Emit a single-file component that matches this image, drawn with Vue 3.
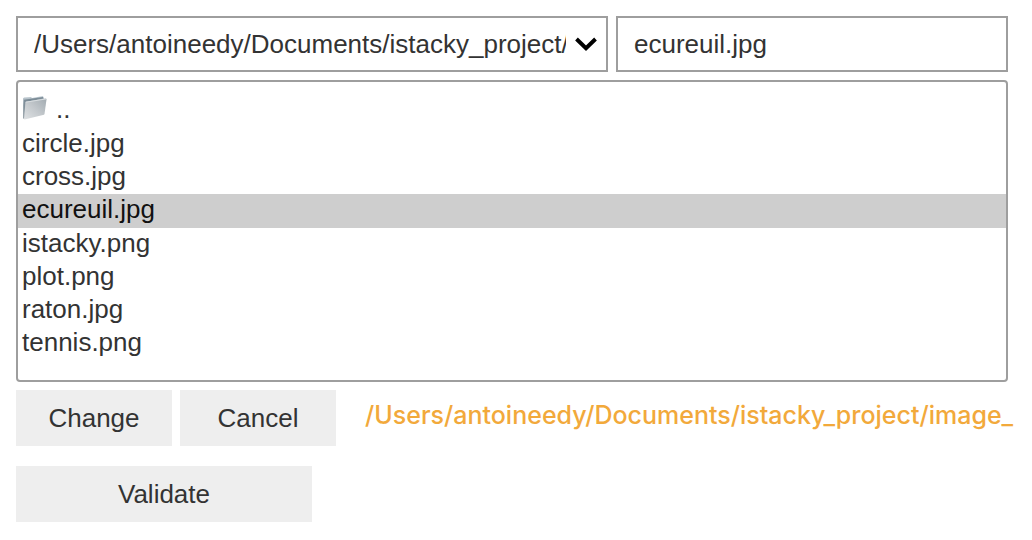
<script setup>
import { ref } from 'vue'

const folder = '/Users/antoineedy/Documents/istacky_project/'
const files = ['circle.jpg', 'cross.jpg', 'ecureuil.jpg', 'istacky.png', 'plot.png', 'raton.jpg', 'tennis.png']
const selected = ref('ecureuil.jpg')
const filename = ref('ecureuil.jpg')
</script>

<template>
  <main class="chooser">
    <div class="fields">
      <div class="folder">
        <select class="field" aria-label="Folder">
          <option>{{ folder }}</option>
        </select>
        <svg class="chevron" viewBox="0 0 22 14" aria-hidden="true">
          <path d="M1.5 2 L11 11.200 L20.500 2" fill="none" stroke="#000" stroke-width="3.900" />
        </svg>
      </div>
      <input v-model="filename" class="field" type="text" aria-label="File name" />
    </div>

    <div class="listing">
      <select v-model="selected" class="files" size="8" aria-label="Files">
        <option class="parent" value="..">..</option>
        <option v-for="file in files" :key="file" :value="file">{{ file }}</option>
      </select>
      <svg class="folder-icon" viewBox="0 0 26 26" aria-hidden="true">
        <defs>
          <linearGradient id="front" x1="1" y1="0" x2="0" y2="1">
            <stop offset="0" stop-color="#a2abb1" />
            <stop offset="0.500" stop-color="#c3c8cc" />
            <stop offset="1" stop-color="#dfe2e4" />
          </linearGradient>
          <linearGradient id="back" x1="0" y1="0" x2="0" y2="1">
            <stop offset="0" stop-color="#c3ced5" />
            <stop offset="0.400" stop-color="#98a5ae" />
            <stop offset="1" stop-color="#9aa4ab" />
          </linearGradient>
        </defs>
        <path d="M1 3.500 L2 2.500 L9 2 L10 3 L21 1 L22 4 L4 24 L1 23.500Z" fill="url(#back)" />
        <path d="M2 4.800 L21 2 L21.500 3.500 L3.500 7 L2.500 20Z" fill="#7c8c97" />
        <path d="M3.500 6.800 L24 3.500 L24.500 4.500 L22.500 19 L22 19.800 L2.500 24.500 L2 24Z" fill="url(#front)" />
        <path d="M3.800 7.200 L24.200 3.900" fill="none" stroke="#d9dee1" stroke-width="1" />
      </svg>
    </div>

    <div class="actions">
      <button type="button">Change</button>
      <button type="button">Cancel</button>
      <output class="path">/Users/antoineedy/Documents/istacky_project/image_</output>
    </div>

    <button class="validate" type="button">Validate</button>
  </main>
</template>

<style>
body {
  margin: 0;
  background: #fff;
}
</style>

<style scoped>
.chooser {
  box-sizing: border-box;
  padding: 16px 24px 16px 16px;
  font: 26px/33px "Liberation Sans", Arial, sans-serif;
  color: #333;
}

.fields {
  display: grid;
  grid-template-columns: 74fr 49fr;
  gap: 8px;
}

.folder,
.listing {
  position: relative;
  min-width: 0;
}

.field {
  display: block;
  box-sizing: border-box;
  width: 100%;
  height: 56px;
  margin: 0;
  padding: 0 16px;
  border: 2px solid #9e9e9e;
  border-radius: 0;
  outline: 0;
  background: #fff;
  font: inherit;
  color: inherit;
}

.folder .field {
  padding-right: 40px;
  appearance: none;
}

.chevron {
  position: absolute;
  top: 21px;
  right: 11px;
  width: 22px;
  height: 14px;
  pointer-events: none;
}

.listing {
  margin-top: 8px;
}

.files {
  display: block;
  box-sizing: border-box;
  width: 100%;
  height: 302px;
  margin: 0;
  padding: 10px 0;
  border: 2px solid #9e9e9e;
  border-radius: 4px;
  outline: 0;
  overflow: hidden;
  background: #fff;
  font: inherit;
  color: inherit;
}

.files option {
  box-sizing: border-box;
  height: 33px;
  min-height: 33px;
  padding: 0 4px;
  color: #333;
}

.files .parent {
  height: 36px;
  padding-top: 2px;
  padding-left: 38px;
}

.files option:checked {
  height: 34px;
  background: #cecece linear-gradient(#cecece, #cecece);
  color: #111;
}

.folder-icon {
  position: absolute;
  top: 15px;
  left: 6px;
  width: 26px;
  height: 26px;
  pointer-events: none;
}

.actions {
  display: flex;
  gap: 8px;
  margin-top: 8px;
}

button {
  flex: none;
  width: 156px;
  height: 56px;
  padding: 0;
  border: 0;
  border-radius: 0;
  background: #eee;
  font: inherit;
  color: inherit;
}

.path {
  flex: 1;
  min-width: 0;
  margin-right: -8px;
  padding: 9px 0 0 21px;
  overflow: hidden;
  font: 500 25px/33px Inter, sans-serif;
  color: #f2a93b;
  white-space: nowrap;
}

.validate {
  width: 296px;
  margin-top: 20px;
}
</style>
